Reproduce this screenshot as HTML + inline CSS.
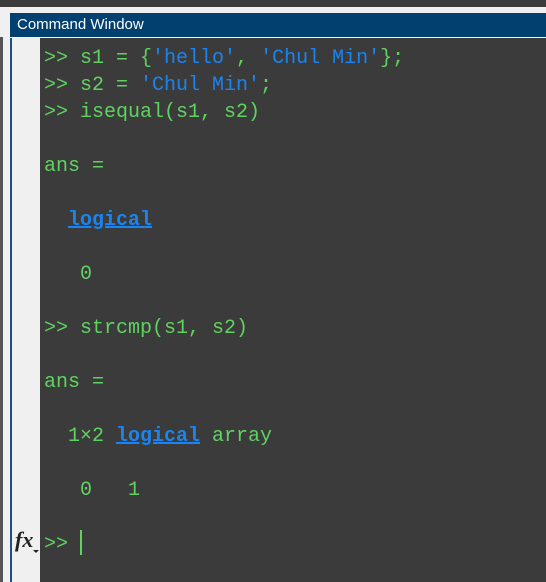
<!DOCTYPE html>
<html><head><style>
html,body{margin:0;padding:0;width:546px;height:582px;overflow:hidden;background:#3b3b3b;position:relative;font-family:"Liberation Sans",sans-serif}
div{position:absolute}
.t{font-family:"Liberation Mono",monospace;font-size:20px;line-height:27px;white-space:pre;color:#5fd35f;left:44px}
.b{color:#1a84f0}
.l{color:#1a84f0;font-weight:bold;text-decoration:underline}
</style></head><body>
<div style="left:0;top:0;width:546px;height:7px;background:#3b3b3b"></div>
<div style="left:0;top:7px;width:546px;height:6px;background:#f0f0f0"></div>
<div style="left:0;top:13px;width:10px;height:569px;background:#f0f0f0"></div>
<div style="left:0;top:37px;width:3px;height:545px;background:#555"></div>
<div style="left:10px;top:13px;width:536px;height:24px;background:#02406f;color:#fff;font-size:15px;line-height:24px;padding-left:7px;box-sizing:border-box">Command Window</div>
<div style="left:10px;top:37px;width:536px;height:1px;background:#fff"></div>
<div style="left:10px;top:38px;width:2px;height:544px;background:#1c4f8a"></div>
<div style="left:12px;top:38px;width:28px;height:544px;background:#f0f0f0"></div>
<div style="left:40px;top:38px;width:506px;height:544px;background:#3b3b3b"></div>
<div style="left:15px;top:527px;font-family:'Liberation Serif',serif;font-style:italic;font-weight:bold;font-size:22px;color:#222">fx</div>
<div style="left:33px;top:550px;width:0;height:0;border-left:3px solid transparent;border-right:3px solid transparent;border-top:3px solid #222"></div>
<div class="t" style="top:45px">&gt;&gt; s1 = {<span class="b">'hello'</span>, <span class="b">'Chul Min'</span>};
&gt;&gt; s2 = <span class="b">'Chul Min'</span>;
&gt;&gt; isequal(s1, s2)

ans =

  <span class="l">logical</span>

   0

&gt;&gt; strcmp(s1, s2)

ans =

  1×2 <span class="l">logical</span> array

   0   1

&gt;&gt; </div>
<div style="left:80px;top:530px;width:2px;height:25px;background:#5fd35f"></div>
</body></html>
